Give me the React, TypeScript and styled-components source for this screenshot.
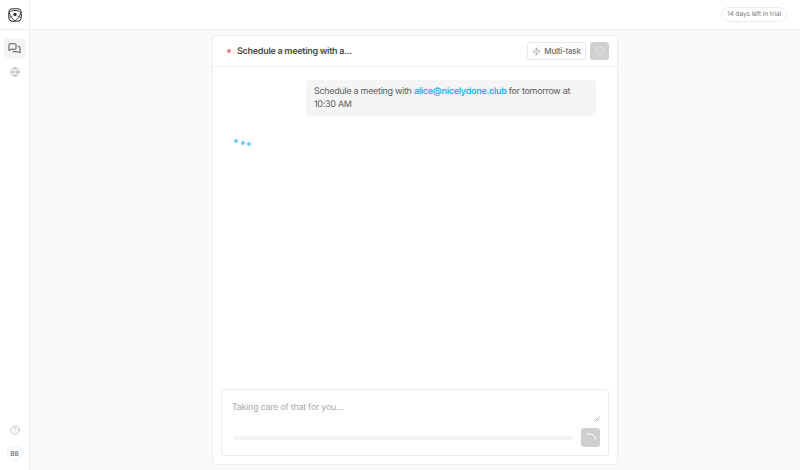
import React from "react";
import styled, { createGlobalStyle } from "styled-components";
import { Globe, CircleHelp, Zap, CircleCheck } from "lucide-react";

const Global = createGlobalStyle`
  html, body { margin: 0; padding: 0; width: 800px; height: 470px; overflow: hidden; background: #fafafa; }
  body { font-family: Inter, "Liberation Sans", sans-serif; color: #404040; text-rendering: geometricPrecision; }
  * { box-sizing: border-box; }
`;

const Shell = styled.div`
  display: grid;
  grid-template-columns: 30px 1fr;
  width: 800px;
  height: 470px;
`;

const Sidebar = styled.aside`
  display: flex;
  flex-direction: column;
  align-items: center;
  background: #fff;
  border-right: 1px solid #ededed;
`;

const LogoCell = styled.div`
  height: 30px;
  width: 100%;
  display: flex;
  align-items: center;
  justify-content: center;
  border-bottom: 1px solid #ededed;
`;

const NavList = styled.nav`
  flex: 1;
  display: flex;
  flex-direction: column;
  align-items: center;
  padding-top: 8px;
  gap: 2px;
`;

const NavItem = styled.div<{ $active?: boolean }>`
  width: 22px;
  height: 21px;
  border-radius: 3px;
  display: flex;
  align-items: center;
  justify-content: center;
  background: ${(p) => (p.$active ? "#f5f5f5" : "transparent")};
  color: ${(p) => (p.$active ? "#525252" : "#8f8f8f")};
`;

const SideFoot = styled.div`
  display: flex;
  flex-direction: column;
  align-items: center;
  gap: 11px;
  padding-bottom: 9px;
  color: #8f8f8f;
`;

const Avatar = styled.div`
  width: 15px;
  height: 15px;
  border-radius: 50%;
  border: 1px solid #efefef;
  display: flex;
  align-items: center;
  justify-content: center;
  font-size: 6.4px;
  font-weight: 600;
  color: #808080;
`;

const Main = styled.main`
  display: flex;
  flex-direction: column;
  min-width: 0;
`;

const TopBar = styled.header`
  height: 30px;
  flex: none;
  background: #fff;
  border-bottom: 1px solid #ededed;
  display: flex;
  align-items: center;
  justify-content: flex-end;
  padding: 0 13px 1px 0;
`;

const TrialPill = styled.div`
  height: 15px;
  width: 66px;
  text-align: center;
  border: 1px solid #ececec;
  border-radius: 8px;
  font-size: 6.6px;
  letter-spacing: -0.1px;
  line-height: 13px;
  color: #808080;
`;

const Stage = styled.div`
  flex: 1;
  min-height: 0;
  display: flex;
  justify-content: center;
  padding: 5px 0;
`;

const Card = styled.section`
  width: 406px;
  background: #fff;
  border: 1px solid #ededed;
  border-radius: 4px;
  display: flex;
  flex-direction: column;
`;

const CardHead = styled.div`
  height: 31px;
  flex: none;
  border-bottom: 1px solid #efefef;
  display: flex;
  align-items: center;
  padding: 0 8px 0 14px;
`;

const StatusDot = styled.span`
  width: 4px;
  height: 4px;
  border-radius: 50%;
  background: #ec7f7f;
  margin-right: 6px;
`;

const Title = styled.h1`
  flex: 1;
  margin: 0;
  font-size: 9px;
  letter-spacing: -0.28px;
  font-weight: 600;
  color: #4a4a4a;
`;

const MultiTask = styled.button`
  width: 59px;
  height: 18px;
  display: flex;
  align-items: center;
  justify-content: center;
  gap: 3px;
  padding: 0;
  background: #fff;
  border: 1px solid #e8e8e8;
  border-radius: 3px;
  font: 500 8px Inter, sans-serif;
  letter-spacing: -0.25px;
  color: #6b6b6b;
  margin-right: 4px;
`;

const DoneButton = styled.button`
  width: 19px;
  height: 18px;
  padding: 0;
  display: flex;
  align-items: center;
  justify-content: center;
  background: #d0d0d0;
  border: none;
  border-radius: 3px;
  color: #f2f2f2;
`;

const Conversation = styled.div`
  flex: 1;
  min-height: 0;
  padding: 13px 21px 0 21px;
  display: flex;
  flex-direction: column;
`;

const Bubble = styled.div`
  align-self: flex-end;
  width: 290px;
  height: 36px;
  padding: 5px 8px;
  background: #f5f5f5;
  border-radius: 3px;
  font-size: 9px;
  letter-spacing: -0.3px;
  line-height: 13px;
  color: #5c5c5c;
`;

const Mention = styled.span`
  color: #2aaef5;
  font-weight: 600;
`;

const Dots = styled.div`
  margin-top: 23px;
  width: 18px;
  height: 8px;
  display: flex;
  gap: 2.5px;
`;

const Dot = styled.span<{ $drop: number }>`
  width: 4px;
  height: 4px;
  border-radius: 50%;
  background: #74c8f8;
  margin-top: ${(p) => p.$drop}px;
`;

const Composer = styled.div`
  flex: none;
  margin: 0 8px 8px 8px;
  height: 67px;
  border: 1px solid #ececec;
  border-radius: 3px;
  padding: 12px 8px 8px 10px;
  display: flex;
  flex-direction: column;
  position: relative;
`;

const Placeholder = styled.div`
  font-size: 8.9px;
  letter-spacing: -0.24px;
  line-height: 12px;
  color: #a8a8a8;
  flex: 1;
`;

const ResizeGrip = styled.svg`
  position: absolute;
  right: 8px;
  top: 26px;
`;

const ComposerFoot = styled.div`
  display: flex;
  align-items: center;
  gap: 8px;
  padding-left: 2px;
`;

const Progress = styled.div`
  flex: 1;
  height: 4px;
  border-radius: 2px;
  background: #f2f2f2;
`;

const SendButton = styled.button`
  width: 19px;
  height: 19px;
  padding: 0;
  border: none;
  border-radius: 3px;
  background: #cfcfcf;
  display: flex;
  align-items: center;
  justify-content: center;
`;

const Logo = () => (
  <svg width="14" height="14" viewBox="0 0 14 14" fill="none">
    <rect x="0.8" y="0.8" width="12.4" height="12.4" rx="3.6" fill="#fff" stroke="#3a3a3a" strokeWidth="1.1" />
    <path d="M1.2 4.4 C3.4 1.8 10.6 1.8 12.8 4.4 M1.2 4.4 C2 8.4 4.4 11.4 7 12.8 C9.6 11.4 12 8.4 12.8 4.4" stroke="#3a3a3a" strokeWidth="1" />
    <path d="M1.2 9.8 C3.2 8.6 4.4 8.2 5 7.8 M12.8 9.8 C10.8 8.6 9.6 8.2 9 7.8" stroke="#6a6a6a" strokeWidth="0.9" />
    <circle cx="7" cy="6.4" r="1.6" fill="#2a2a2a" />
  </svg>
);

const ChatIcon = () => (
  <svg width="13" height="13" viewBox="0 0 13 13" fill="none" stroke="currentColor" strokeWidth="1" strokeLinejoin="round">
    <path d="M1 2.4 Q1 1.8 1.6 1.8 H7.4 Q8 1.8 8 2.4 V6.6 Q8 7.2 7.4 7.2 H3.2 L1 8.6 Z" fill="#f5f5f5" />
    <path d="M9.8 4.6 H11.4 Q12 4.6 12 5.2 V10.8 L10.2 9.8 H5.6 Q5 9.8 5 9.2 V8.6" />
  </svg>
);

export default function App() {
  return (
    <Shell>
      <Global />
      <Sidebar>
        <LogoCell><Logo /></LogoCell>
        <NavList>
          <NavItem $active><ChatIcon /></NavItem>
          <NavItem><Globe size={10} strokeWidth={1.3} /></NavItem>
        </NavList>
        <SideFoot>
          <CircleHelp size={10} strokeWidth={1.2} />
          <Avatar>BB</Avatar>
        </SideFoot>
      </Sidebar>
      <Main>
        <TopBar><TrialPill>14 days left in trial</TrialPill></TopBar>
        <Stage>
          <Card>
            <CardHead>
              <StatusDot />
              <Title>Schedule a meeting with a...</Title>
              <MultiTask><Zap size={9} strokeWidth={1.4} />Multi-task</MultiTask>
              <DoneButton><CircleCheck size={10} strokeWidth={1.2} /></DoneButton>
            </CardHead>
            <Conversation>
              <Bubble>
                Schedule a meeting with <Mention>alice@nicelydone.club</Mention> for tomorrow at 10:30 AM
              </Bubble>
              <Dots>
                <Dot $drop={0} />
                <Dot $drop={2} />
                <Dot $drop={3} />
              </Dots>
            </Conversation>
            <Composer>
              <Placeholder>Taking care of that for you...</Placeholder>
              <ResizeGrip width="6" height="6" viewBox="0 0 6 6">
                <path d="M0.5 5.5 L5.5 0.5 M3 5.5 L5.5 3" stroke="#a0a0a0" strokeWidth="0.8" />
              </ResizeGrip>
              <ComposerFoot>
                <Progress />
                <SendButton>
                  <svg width="12" height="12" viewBox="0 0 12 12" fill="none">
                    <path d="M1.5 2.6 C5.5 0.8 10 2.8 10.5 7.5" stroke="#f5f5f5" strokeWidth="1.1" strokeLinecap="round" />
                  </svg>
                </SendButton>
              </ComposerFoot>
            </Composer>
          </Card>
        </Stage>
      </Main>
    </Shell>
  );
}
